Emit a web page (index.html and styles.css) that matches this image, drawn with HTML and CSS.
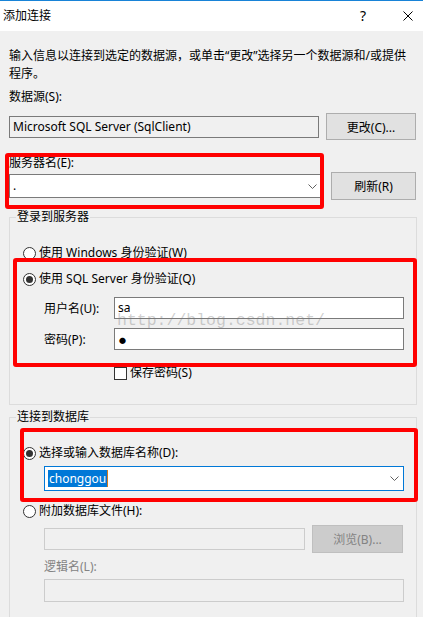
FILE: index.html
```html
<!DOCTYPE html>
<html lang="zh-CN">
<head>
<meta charset="utf-8">
<title>添加连接</title>
<link rel="stylesheet" href="styles.css">
</head>
<body>
<div class="dialog">
  <div class="titlebar">
    <span class="title">添加连接</span>
    <span class="help">?</span>
    <svg class="close" width="10" height="10" viewBox="0 0 10 10"><path d="M0.5 0.5 L9.5 9.5 M9.5 0.5 L0.5 9.5" stroke="#000" stroke-width="1" fill="none"/></svg>
  </div>
  <div class="content">
    <p class="desc">输入信息以连接到选定的数据源，或单击“更改”选择另一个数据源和/或提供<br>程序。</p>
    <div class="label ds-label">数据源(S):</div>
    <div class="row ds-row">
      <div class="textbox readonly ds-box">Microsoft SQL Server (SqlClient)</div>
      <div class="button change-btn">更改(C)...</div>
    </div>
    <div class="label server-label">服务器名(E):</div>
    <div class="row server-row">
      <div class="combo server-combo"><span class="combo-text">.</span><svg class="chevron" width="9" height="5" viewBox="0 0 9 5"><path d="M0.5 0.5 L4.5 4.5 L8.5 0.5" stroke="#606060" fill="none"/></svg></div>
      <div class="button refresh-btn">刷新(R)</div>
    </div>

    <div class="group login-group">
      <div class="group-title">登录到服务器</div>
      <div class="radio-row first-radio"><span class="radio"></span><span>使用 Windows 身份验证(W)</span></div>
      <div class="radio-row second-radio"><span class="radio checked"></span><span>使用 SQL Server 身份验证(Q)</span></div>
      <div class="field-row user-row"><span class="field-label">用户名(U):</span><div class="textbox field-box">sa</div></div>
      <div class="field-row pass-row"><span class="field-label">密码(P):</span><div class="textbox field-box"><span class="bullet">●</span></div></div>
      <div class="check-row"><span class="checkbox"></span><span>保存密码(S)</span></div>
    </div>

    <div class="group db-group">
      <div class="group-title">连接到数据库</div>
      <div class="radio-row db-radio"><span class="radio checked"></span><span>选择或输入数据库名称(D):</span></div>
      <div class="combo focused db-combo"><span class="combo-text"><span class="selected">chonggou</span><span class="caret"></span></span><svg class="chevron" width="9" height="5" viewBox="0 0 9 5"><path d="M0.5 0.5 L4.5 4.5 L8.5 0.5" stroke="#606060" fill="none"/></svg></div>
      <div class="radio-row attach-radio"><span class="radio"></span><span>附加数据库文件(H):</span></div>
      <div class="file-row">
        <div class="textbox disabled file-box"></div>
        <div class="button disabled-btn browse-btn">浏览(B)...</div>
      </div>
      <div class="label disabled-text logic-label">逻辑名(L):</div>
      <div class="textbox disabled logic-box"></div>
    </div>
  </div>

  <div class="watermark">http://blog.csdn.net/</div>
  <div class="mark mark-server"></div>
  <div class="mark mark-auth"></div>
  <div class="mark mark-db"></div>
</div>
</body>
</html>
```

FILE: styles.css
```css
html, body {
  margin: 0;
  padding: 0;
}
body {
  background: #f0f0f0;
  font-family: "Noto Sans", "Noto Sans CJK SC", sans-serif;
  font-size: 12px;
  color: #000;
  overflow: hidden;
}
.dialog {
  position: relative;
  width: 423px;
  height: 617px;
  overflow: hidden;
}
.titlebar {
  height: 30px;
  border-top: 1px solid #1883d7;
  background: #fff;
  display: flex;
  align-items: center;
  padding-left: 3px;
}
.title {
  line-height: 30px;
  font-size: 12px;
}
.help {
  margin-left: auto;
  font-size: 14px;
  line-height: 30px;
  margin-right: 37px;
}
.close {
  margin-right: 10px;
}
.content {
  padding: 16px 6px 0 9px;
}
.desc {
  margin: 0;
  line-height: 18px;
}
.label {
  line-height: 18px;
}
.ds-label {
  margin-top: 5px;
}
.row {
  display: flex;
  align-items: center;
}
.ds-row {
  margin-top: 7px;
  gap: 7px;
}
.textbox {
  box-sizing: border-box;
  height: 22px;
  border: 1px solid #7a7a7a;
  background: #fff;
  padding-left: 3px;
  line-height: 20px;
  white-space: nowrap;
  overflow: hidden;
}
.textbox.readonly {
  background: #f0f0f0;
}
.textbox.disabled {
  background: #f0f0f0;
  border-color: #cccccc;
}
.ds-box {
  width: 310px;
}
.button {
  box-sizing: border-box;
  background: #e1e1e1;
  border: 1px solid #adadad;
  display: flex;
  align-items: center;
  justify-content: center;
}
.change-btn {
  width: 90px;
  height: 27px;
}
.server-label {
  margin-top: 13px;
  line-height: 19px;
}
.server-row {
  gap: 9px;
}
.combo {
  box-sizing: border-box;
  border: 1px solid #7a7a7a;
  background: #fff;
  display: flex;
  align-items: center;
  padding-left: 3px;
  padding-right: 4px;
}
.combo-text {
  flex: 1;
  line-height: 20px;
  display: flex;
  align-items: center;
}
.server-combo {
  width: 313px;
  height: 24px;
}
.refresh-btn {
  width: 85px;
  height: 28px;
}
.group {
  box-sizing: border-box;
  border: 1px solid #dcdcdc;
  padding-left: 13px;
}
.group-title {
  width: fit-content;
  margin: -9px 0 0 -7px;
  padding: 0 1px;
  background: #f0f0f0;
  line-height: 16px;
}
.login-group {
  margin-top: 17px;
  padding-bottom: 22px;
}
.radio-row {
  display: flex;
  align-items: center;
  gap: 3px;
  line-height: 18px;
}
.radio {
  box-sizing: border-box;
  width: 13px;
  height: 13px;
  border: 1px solid #333;
  border-radius: 50%;
  background: #fff;
  display: flex;
  align-items: center;
  justify-content: center;
}
.radio.checked::after {
  content: "";
  width: 7px;
  height: 7px;
  border-radius: 50%;
  background: #333;
}
.first-radio {
  margin-top: 19px;
}
.second-radio {
  margin-top: 8px;
}
.field-row {
  display: flex;
  align-items: center;
  margin-left: 21px;
  margin-top: 9px;
}
.field-label {
  width: 70px;
}
.field-box {
  width: 290px;
}
.bullet {
  font-size: 7px;
  margin-left: 1px;
}
.check-row {
  display: flex;
  align-items: center;
  gap: 3px;
  margin-left: 91px;
  margin-top: 14px;
  line-height: 18px;
}
.checkbox {
  box-sizing: border-box;
  width: 13px;
  height: 13px;
  border: 1px solid #333;
  background: #fff;
}
.db-group {
  margin-top: 12px;
  padding-bottom: 40px;
}
.db-radio {
  margin-top: 19px;
}
.db-combo {
  margin: 4px 0 0 21px;
  width: 360px;
  height: 25px;
}
.combo.focused {
  border-color: #0078d7;
}
.selected {
  background: #0078d7;
  color: #fff;
  line-height: 17px;
  padding: 0 1px;
}
.caret {
  width: 1px;
  height: 17px;
  background: #d47a1c;
}
.attach-radio {
  margin-top: 11px;
}
.file-row {
  display: flex;
  align-items: center;
  gap: 7px;
  margin: 5px 0 0 21px;
}
.file-box {
  width: 261px;
}
.browse-btn {
  width: 91px;
  height: 28px;
}
.disabled-btn {
  background: #cccccc;
  border-color: #bfbfbf;
  color: #838383;
}
.disabled-text {
  color: #838383;
}
.logic-label {
  margin: 5px 0 0 21px;
}
.logic-box {
  margin: 3px 0 0 21px;
  width: 360px;
  height: 23px;
}
.watermark {
  position: absolute;
  left: 117px;
  top: 312px;
  font-family: "Liberation Mono", monospace;
  font-size: 16.5px;
  line-height: 17px;
  color: rgba(120, 120, 120, 0.35);
  pointer-events: none;
}
.mark {
  position: absolute;
  box-sizing: border-box;
  border: 4px solid #ff0000;
  border-radius: 3px;
}
.mark-server {
  left: 5px;
  top: 153px;
  width: 319px;
  height: 56px;
}
.mark-auth {
  left: 13px;
  top: 258px;
  width: 404px;
  height: 109px;
}
.mark-db {
  left: 20px;
  top: 428px;
  width: 398px;
  height: 74px;
}
```
